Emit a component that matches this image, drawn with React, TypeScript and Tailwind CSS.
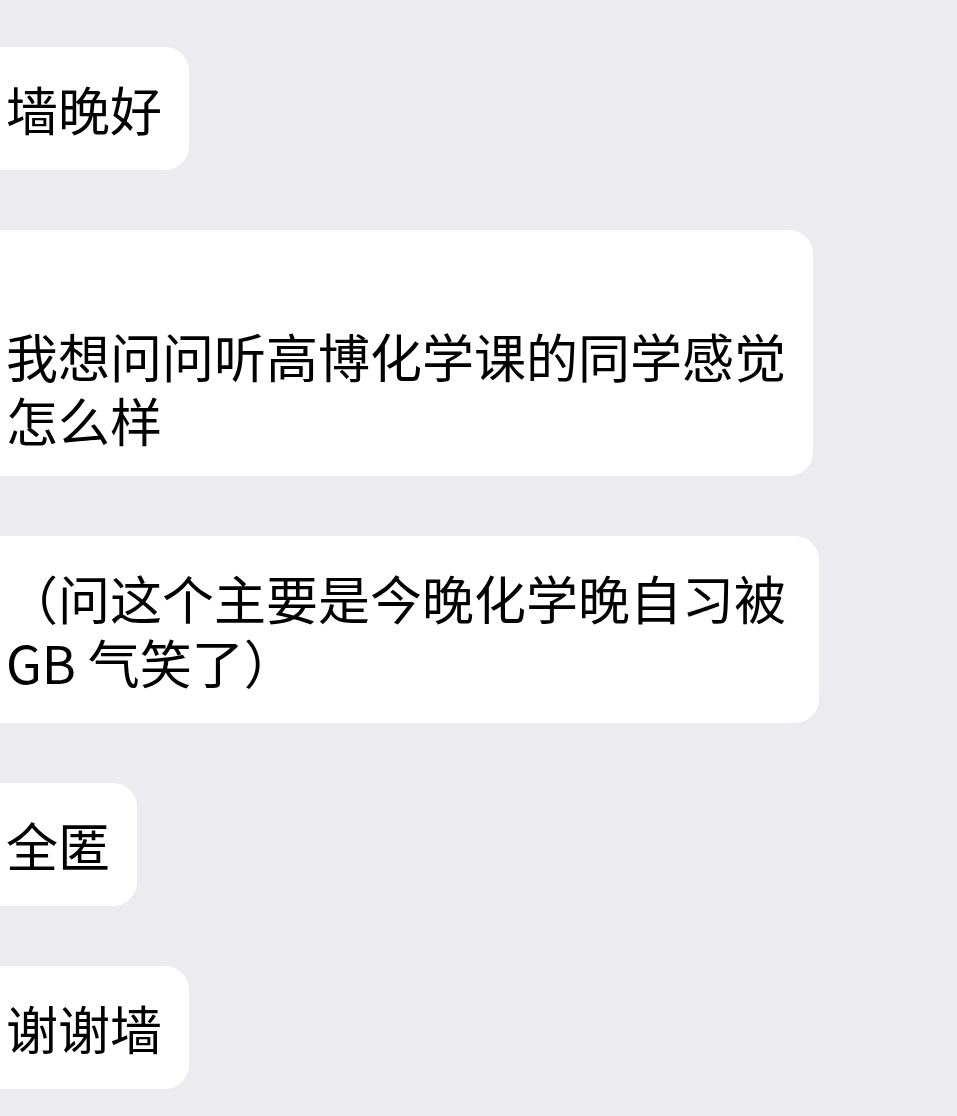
import React from "react";

const font = {
  fontFamily: '"Noto Sans CJK SC", "Noto Sans", sans-serif',
};

function Bubble({
  children,
  className = "",
}: {
  children: React.ReactNode;
  className?: string;
}) {
  return (
    <div
      className={`ml-[-24px] w-fit rounded-[24px] bg-white pl-[30px] pr-[27px] text-[52px] leading-[64px] text-black ${className}`}
    >
      <div className="max-w-[780px]">{children}</div>
    </div>
  );
}

export default function App() {
  return (
    <div
      className="min-h-[1116px] w-full overflow-hidden bg-[#ebebf0] pt-[47px] pb-[30px]"
      style={font}
    >
      <div className="flex flex-col items-start gap-[60px]">
        <Bubble className="py-[29.5px]">墙晚好</Bubble>
        <Bubble className="pt-[29.5px] pb-[24.5px]">
          <br />
          我想问问听高博化学课的同学感觉怎么样
        </Bubble>
        <Bubble className="py-[29.5px] pr-[33px]">
          （问这个主要是今晚化学晚自习被GB 气笑了）
        </Bubble>
        <Bubble className="py-[29.5px]">全匿</Bubble>
        <Bubble className="py-[29.5px]">谢谢墙</Bubble>
      </div>
    </div>
  );
}
